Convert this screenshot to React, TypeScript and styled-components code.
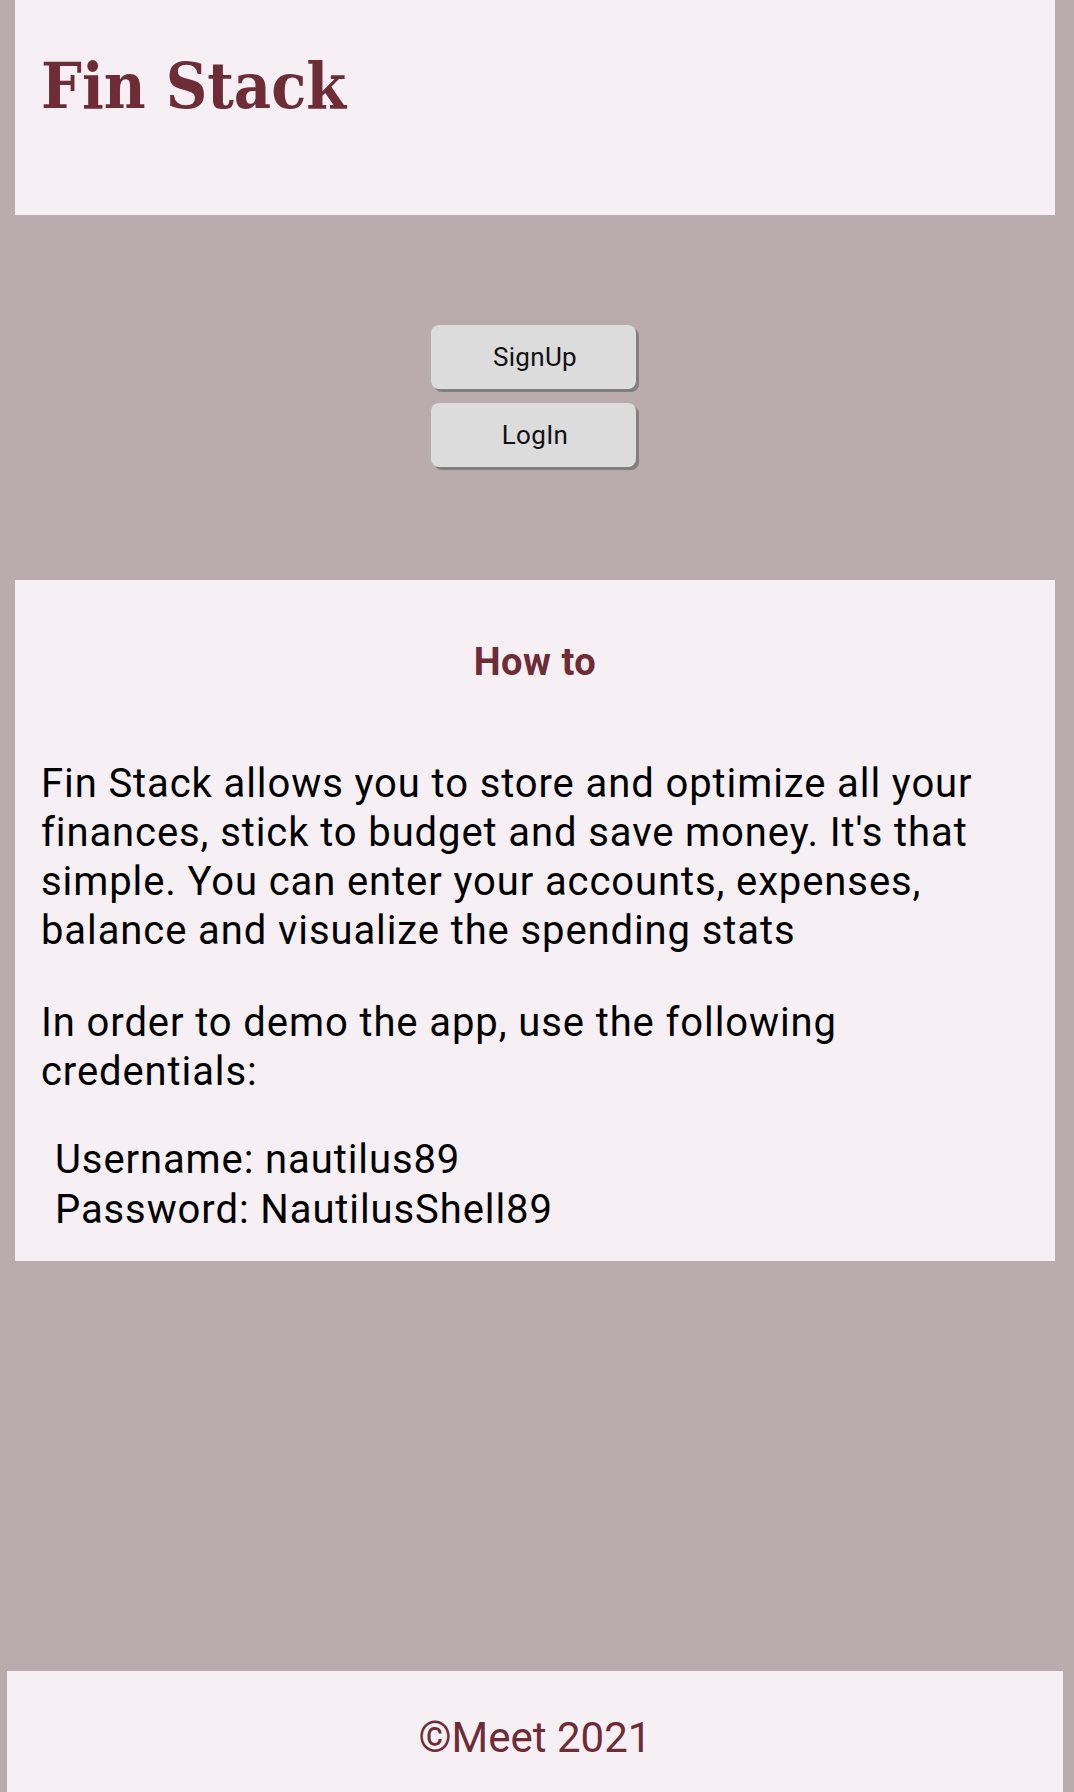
import React from "react";
import styled, { createGlobalStyle } from "styled-components";

const Global = createGlobalStyle`
  html, body {
    margin: 0;
    padding: 0;
    background: #baabae;
  }
  body {
    font-family: Roboto, "Liberation Sans", Arial, sans-serif;
  }
  #root {
    min-height: 1792px;
  }
`;

const Page = styled.div`
  display: flex;
  flex-direction: column;
  min-height: 1792px;
`;

const Header = styled.header`
  margin: 0 19px 0 15px;
  height: 215px;
  box-sizing: border-box;
  background: #f6f0f4;
  padding: 46px 0 0 26px;
`;

const Title = styled.h1`
  margin: 0;
  font-family: "DejaVu Serif", "Liberation Serif", serif;
  font-stretch: condensed;
  font-weight: 700;
  font-size: 64px;
  line-height: 80px;
  color: #6d2c36;
`;

const ButtonStack = styled.div`
  display: flex;
  flex-direction: column;
  align-items: center;
  gap: 14px;
  padding: 110px 8px 113px 0;
`;

const Button = styled.button`
  width: 205px;
  height: 64px;
  border: none;
  border-radius: 8px;
  background: #dcdcdc;
  box-shadow: 3px 3px 0 #7f7f7f;
  font-family: Roboto, sans-serif;
  font-size: 26px;
  letter-spacing: 0.3px;
  color: #111;
  cursor: pointer;
  padding: 0 0 0 4px;
`;

const Card = styled.section`
  margin: 0 19px 0 15px;
  background: #f6f0f4;
  padding: 60px 26px 26px 26px;
  color: #000;
`;

const CardTitle = styled.h2`
  margin: 0 0 75px;
  text-align: center;
  font-size: 38px;
  letter-spacing: 0.5px;
  font-weight: 700;
  line-height: 44px;
  color: #6d2c36;
`;

const Paragraph = styled.p`
  margin: 0 0 43px;
  font-size: 40px;
  letter-spacing: 0.9px;
  line-height: 49px;
`;

const Credentials = styled.p`
  margin: -4px 0 0;
  padding-left: 14px;
  font-size: 40px;
  letter-spacing: 0.9px;
  line-height: 50px;
`;

const Spacer = styled.div`
  flex: 1;
`;

const Footer = styled.footer`
  margin: 0 11px 0 7px;
  height: 121px;
  background: #f6f0f4;
  display: flex;
  justify-content: center;
  align-items: flex-start;
  padding-top: 42px;
  box-sizing: border-box;
  font-size: 42px;
  color: #6d2c36;
`;

export default function App() {
  return (
    <>
      <Global />
      <Page>
        <Header>
          <Title>Fin Stack</Title>
        </Header>
        <ButtonStack>
          <Button>SignUp</Button>
          <Button>LogIn</Button>
        </ButtonStack>
        <Card>
          <CardTitle>How to</CardTitle>
          <Paragraph>
            Fin Stack allows you to store and optimize all your finances, stick
            to budget and save money. It's that simple. You can enter your
            accounts, expenses, balance and visualize the spending stats
          </Paragraph>
          <Paragraph>
            In order to demo the app, use the following credentials:
          </Paragraph>
          <Credentials>
            Username: nautilus89
            <br />
            Password: NautilusShell89
          </Credentials>
        </Card>
        <Spacer />
        <Footer>©Meet 2021</Footer>
      </Page>
    </>
  );
}
